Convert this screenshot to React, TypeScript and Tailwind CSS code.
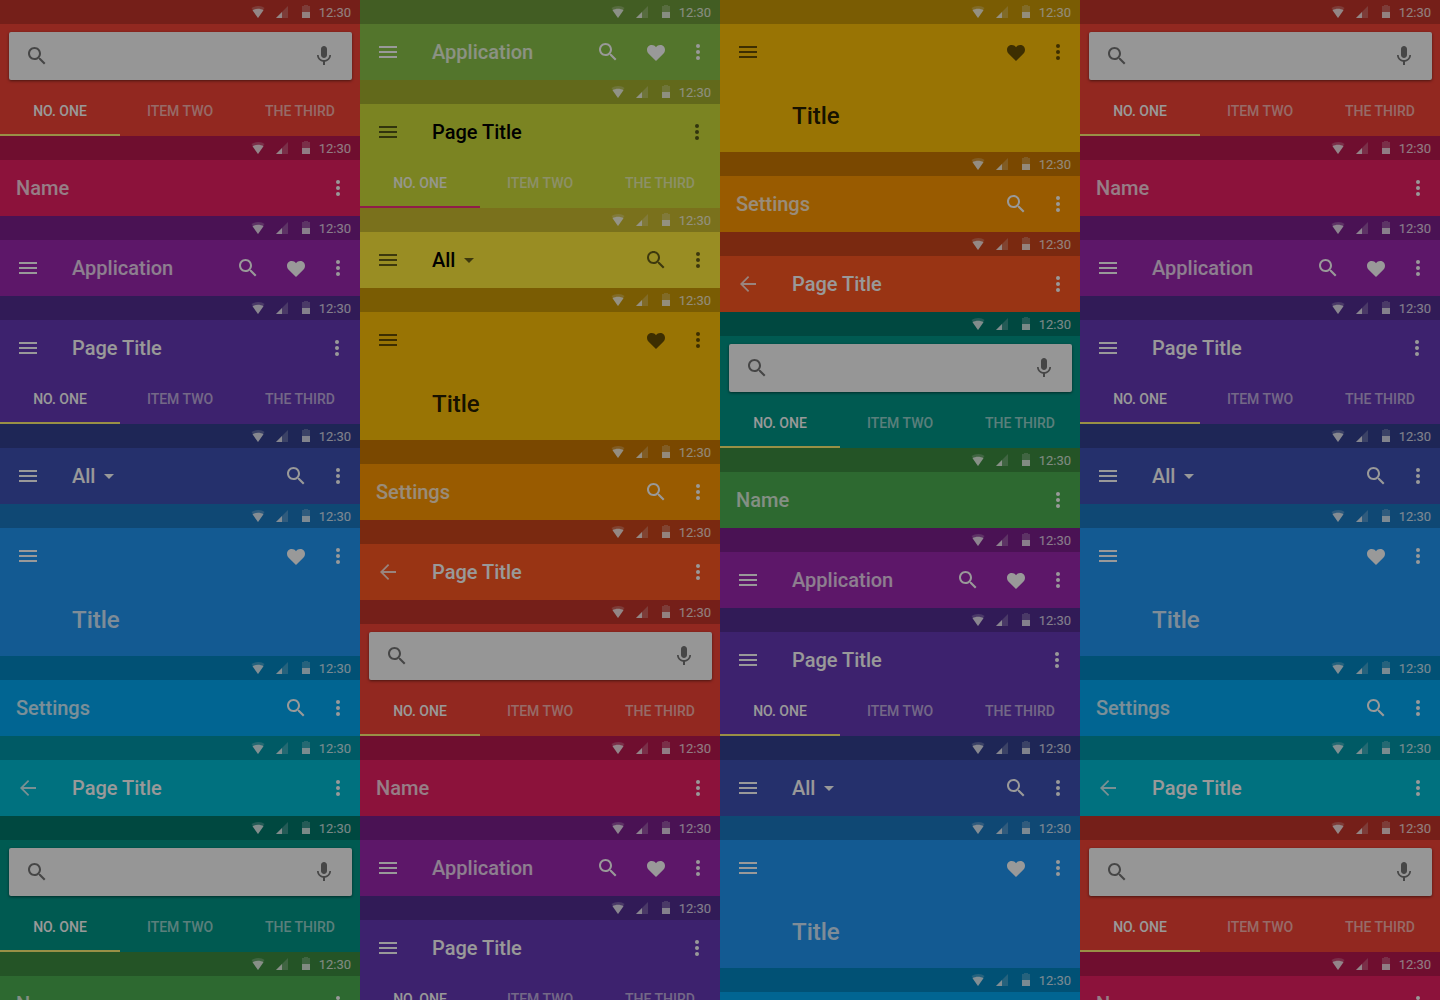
import { useState } from "react";
import clsx from "clsx";

type Kind = "search" | "name" | "application" | "tabs" | "all" | "title" | "settings" | "back";

interface Screen {
  kind: Kind;
  color: string;
  dark?: boolean;
}

const red: Screen = { kind: "search", color: "bg-[#f44336]" };
const pink: Screen = { kind: "name", color: "bg-[#e91e63]" };
const purple: Screen = { kind: "application", color: "bg-[#9c27b0]" };
const deepPurple: Screen = { kind: "tabs", color: "bg-[#673ab7]" };
const indigo: Screen = { kind: "all", color: "bg-[#3f51b5]" };
const blue: Screen = { kind: "title", color: "bg-[#2196f3]" };
const lightBlue: Screen = { kind: "settings", color: "bg-[#03a9f4]" };
const cyan: Screen = { kind: "back", color: "bg-[#00bcd4]" };
const teal: Screen = { kind: "search", color: "bg-[#009688]" };
const green: Screen = { kind: "name", color: "bg-[#4caf50]" };
const lightGreen: Screen = { kind: "application", color: "bg-[#8bc34a]" };
const lime: Screen = { kind: "tabs", color: "bg-[#cddc39]", dark: true };
const yellow: Screen = { kind: "all", color: "bg-[#ffeb3b]", dark: true };
const amber: Screen = { kind: "title", color: "bg-[#ffc107]", dark: true };
const orange: Screen = { kind: "settings", color: "bg-[#ff9800]" };
const deepOrange: Screen = { kind: "back", color: "bg-[#ff5722]" };

const columns: Screen[][] = [
  [red, pink, purple, deepPurple, indigo, blue, lightBlue, cyan, teal, green],
  [lightGreen, lime, yellow, amber, orange, deepOrange, red, pink, purple, deepPurple],
  [amber, orange, deepOrange, teal, green, purple, deepPurple, indigo, blue, lightBlue],
  [red, pink, purple, deepPurple, indigo, blue, lightBlue, cyan, red, pink],
];

const icons = {
  menu: "M3 18h18v-2H3v2zm0-5h18v-2H3v2zm0-7v2h18V6H3z",
  back: "M20 11H7.500l5.700-5.700L12 4l-8 8 8 8 1.200-1.300L7.500 13H20v-2z",
  search:
    "M15.5 14h-.79l-.28-.27C15.41 12.59 16 11.11 16 9.5 16 5.91 13.09 3 9.5 3S3 5.91 3 9.5 5.91 16 9.5 16c1.61 0 3.09-.59 4.23-1.57l.27.28v.79l5 4.99L20.49 19l-4.99-5zm-6 0C7.01 14 5 11.99 5 9.5S7.01 5 9.5 5 14 7.01 14 9.5 11.99 14 9.5 14z",
  heart:
    "M12 21l-6.600-6.400C4 13.200 3 11.900 3 9.800 3 7 5.200 5 7.800 5c1.700 0 3.300.9 4.200 2.300C12.900 5.900 14.500 5 16.200 5 18.800 5 21 7 21 9.800c0 2.100-1 3.400-2.400 4.800L12 21z",
  mic: "M12 14c1.660 0 2.990-1.340 2.990-3L15 5c0-1.660-1.340-3-3-3S9 3.340 9 5v6c0 1.660 1.340 3 3 3zm5.300-3c0 3-2.540 5.100-5.300 5.100S6.700 14 6.700 11H5c0 3.410 2.720 6.230 6 6.720V21h2v-3.280c3.280-.48 6-3.300 6-6.720h-1.700z",
  dropDown: "M7 10l5 5 5-5z",
};

function Icon({ name }: { name: keyof typeof icons }) {
  return (
    <svg viewBox="0 0 24 24" className="size-6 fill-current" aria-hidden="true">
      <path d={icons[name]} />
    </svg>
  );
}

function IconButton({ name, label }: { name: keyof typeof icons; label: string }) {
  return (
    <button type="button" aria-label={label} className="size-6 shrink-0">
      <Icon name={name} />
    </button>
  );
}

function MoreButton() {
  return (
    <button type="button" aria-label="More options" className="h-6 w-3 shrink-0">
      <svg viewBox="0 0 12 24" className="h-6 w-3 fill-current" aria-hidden="true">
        <circle cx="6" cy="6" r="2" />
        <circle cx="6" cy="12" r="2" />
        <circle cx="6" cy="18" r="2" />
      </svg>
    </button>
  );
}

function StatusBar() {
  return (
    <div className="flex h-6 items-center justify-end bg-black/20 pr-[9px] text-white/80">
      <svg viewBox="0 0 60 24" className="mr-2 h-6 w-15 fill-current" aria-hidden="true">
        {/* wifi */}
        <path d="M.5 8C4.500 5.300 10.500 5.300 13.500 8L7 18z" opacity=".3" />
        <path d="M1.500 10.300C4.500 8.300 9.500 8.300 12.500 10.300L7 18z" />
        {/* signal */}
        <path d="M25 18h12V6z" opacity=".3" />
        <path d="M25 18h6v-6z" />
        {/* battery */}
        <path d="M51 6h2V5h4v1h2v6h-8z" opacity=".3" />
        <path d="M51 12h8v6h-8z" />
      </svg>
      <span className="pt-px text-[13px] leading-6">12:30</span>
    </div>
  );
}

function Tabs({ dark }: { dark?: boolean }) {
  const [active, setActive] = useState(0);

  return (
    <div role="tablist" className="grid h-12 grid-cols-3">
      {["NO. ONE", "ITEM TWO", "THE THIRD"].map((tab, i) => (
        <button
          key={tab}
          type="button"
          role="tab"
          aria-selected={active === i}
          onClick={() => setActive(i)}
          className={clsx(
            "border-b-2 text-sm font-medium whitespace-nowrap",
            active !== i && "border-transparent text-white/60",
            active === i && (dark ? "border-[#f0307c] text-white/90" : "border-[#fff176] text-white")
          )}
        >
          {tab}
        </button>
      ))}
    </div>
  );
}

function SearchBox() {
  return (
    <div className="pt-2 pr-2 pb-2 pl-[9px]">
      <div className="flex h-12 items-center rounded-xs bg-[#fafafa] px-4 text-[#757575] shadow-[0_1px_3px_rgba(0,0,0,0.5)]">
        <Icon name="search" />
        <input type="text" aria-label="Search" className="min-w-0 flex-1 px-4 text-base outline-none" />
        <IconButton name="mic" label="Voice search" />
      </div>
    </div>
  );
}

function Heading({ children, dark, strong }: { children: string; dark?: boolean; strong?: boolean }) {
  return (
    <h2
      className={clsx(
        "text-xl font-medium",
        dark ? "text-black" : strong ? "text-white" : "text-white/80"
      )}
    >
      {children}
    </h2>
  );
}

function Toolbar({ kind, dark }: { kind: Kind; dark?: boolean }) {
  const hasNav = kind !== "name" && kind !== "settings";

  return (
    <div className={clsx("flex h-14 items-center pl-4", kind === "tabs" ? "pr-[17px]" : "pr-4", dark ? "text-black/60" : "text-white")}>
      {hasNav && (
        <div className={clsx("mr-8 flex", kind === "back" && "opacity-80")}>
          {kind === "back" ? <IconButton name="back" label="Back" /> : <IconButton name="menu" label="Menu" />}
        </div>
      )}
      {kind === "name" && <Heading>Name</Heading>}
      {kind === "settings" && <Heading>Settings</Heading>}
      {kind === "application" && <Heading>Application</Heading>}
      {(kind === "tabs" || kind === "back") && <Heading strong dark={dark}>Page Title</Heading>}
      {kind === "all" && (
        <div className="relative">
          <select
            aria-label="Filter"
            className={clsx("w-12 appearance-none text-xl font-medium outline-none", dark ? "text-black" : "text-white")}
          >
            <option>All</option>
          </select>
          <span className="pointer-events-none absolute top-0.5 -right-px">
            <Icon name="dropDown" />
          </span>
        </div>
      )}
      <div className="ml-auto flex gap-6">
        {(kind === "application" || kind === "all" || kind === "settings") && <IconButton name="search" label="Search" />}
        {(kind === "application" || kind === "title") && <IconButton name="heart" label="Favorite" />}
        <MoreButton />
      </div>
    </div>
  );
}

function AppBar({ kind, color, dark }: Screen) {
  return (
    <section className={color}>
      <StatusBar />
      {kind === "search" ? <SearchBox /> : <Toolbar kind={kind} dark={dark} />}
      {kind === "title" && (
        <h2 className={clsx("flex h-18 items-center pl-18 text-2xl font-medium", dark ? "text-black/87" : "text-white/80")}>
          Title
        </h2>
      )}
      {(kind === "search" || kind === "tabs") && <Tabs dark={dark} />}
    </section>
  );
}

export default function App() {
  return (
    <main className="relative grid h-screen grid-cols-4 overflow-hidden font-[Roboto,sans-serif]">
      {columns.map((screens, i) => (
        <div key={i}>
          {screens.map((screen, j) => (
            <AppBar key={j} {...screen} />
          ))}
        </div>
      ))}
      <div className="pointer-events-none absolute inset-0 bg-black/40" />
    </main>
  );
}
